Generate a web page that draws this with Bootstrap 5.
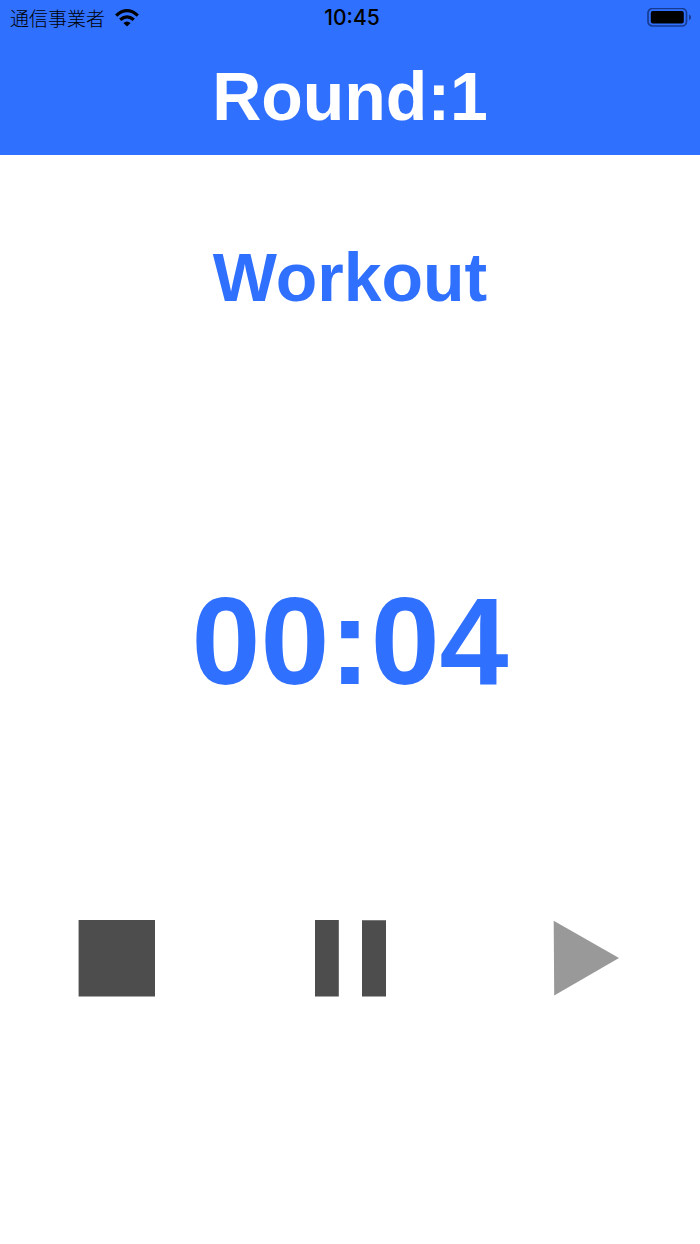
<!DOCTYPE html>
<html lang="en">
<head>
<meta charset="utf-8">
<meta name="viewport" content="width=device-width, initial-scale=1">
<title>Workout timer</title>
<link href="https://cdn.jsdelivr.net/npm/bootstrap@5.3.0/dist/css/bootstrap.min.css" rel="stylesheet">
<style>
:root { --timer-blue: #3070ff; }
body { font-family: "Arial Rounded MT Bold", "Liberation Sans", Arial, sans-serif; color: var(--timer-blue); background: #fff; }
.top-bar { background: var(--timer-blue); }
.status-bar { height: 36px; padding: 0 6px 0 10px; color: #000; font-size: 19px; line-height: 34px; }
.carrier { font-family: "Noto Sans CJK JP", sans-serif; font-weight: 300; }
.clock { font-family: Inter, sans-serif; font-weight: 500; font-size: 21px; }
.heading-text { font-size: 68px; line-height: 80px; font-weight: 700; }
.round-title { padding: 20px 0 19px; color: #fff; }
.phase-title { padding-top: 82px; }
.time-left { padding-top: 252px; font-size: 124px; line-height: 144px; font-weight: 700; }
.controls { padding-top: 205px; }
.controls svg { width: 80px; height: 80px; }
</style>
</head>
<body>
<header class="top-bar">
  <div class="status-bar row g-0 align-items-center">
    <div class="col d-flex align-items-center gap-2">
      <span class="carrier" lang="ja">通信事業者</span>
      <svg width="28" height="20" viewBox="0 0 28 20" role="img" aria-label="Wi-Fi">
        <g fill="none" stroke="#000" stroke-width="3.2">
          <path d="M3.2 7.6Q14 -2.2 24.8 7.6"/>
          <path d="M7.2 11.8Q14 5.8 20.8 11.8"/>
        </g>
        <path d="M10.4 15Q14 11.8 17.6 15L14 18.5Z"/>
      </svg>
    </div>
    <time class="clock col-auto">10:45</time>
    <div class="col d-flex justify-content-end">
      <svg width="48" height="20" viewBox="0 0 48 20" role="img" aria-label="Battery full">
        <rect x="2" y="0.5" width="38.5" height="17.5" rx="4.5" fill="none" stroke="#163b91" stroke-width="1.7"/>
        <rect x="4.8" y="3" width="33" height="12.5" rx="2"/>
        <path d="M43 6.2Q45 7.2 45 9.3T43 12.4Z" fill="#163b91"/>
      </svg>
    </div>
  </div>
  <h1 class="heading-text round-title text-center m-0">Round:1</h1>
</header>
<main class="text-center">
  <h2 class="heading-text phase-title m-0">Workout</h2>
  <div class="time-left" role="timer">00:04</div>
  <div class="controls row g-0">
    <div class="col">
      <button type="button" class="btn p-0 border-0" aria-label="Stop">
        <svg class="d-block" viewBox="0 0 80 80"><path d="M1.6 2H78v76.5H1.6Z" fill="#4d4d4d"/></svg>
      </button>
    </div>
    <div class="col">
      <button type="button" class="btn p-0 border-0" aria-label="Pause">
        <svg class="d-block" viewBox="0 0 80 80"><path d="M5 2h23.8v76.5H5ZM52 2.3h24v76.2H52Z" fill="#4d4d4d"/></svg>
      </button>
    </div>
    <div class="col">
      <button type="button" class="btn p-0 border-0" aria-label="Play">
        <svg class="d-block" viewBox="0 0 80 80"><path d="M10.7 2.7 76 40 11.2 77.5Z" fill="#999"/></svg>
      </button>
    </div>
  </div>
</main>
<script src="https://cdn.jsdelivr.net/npm/bootstrap@5.3.0/dist/js/bootstrap.bundle.min.js"></script>
</body>
</html>
